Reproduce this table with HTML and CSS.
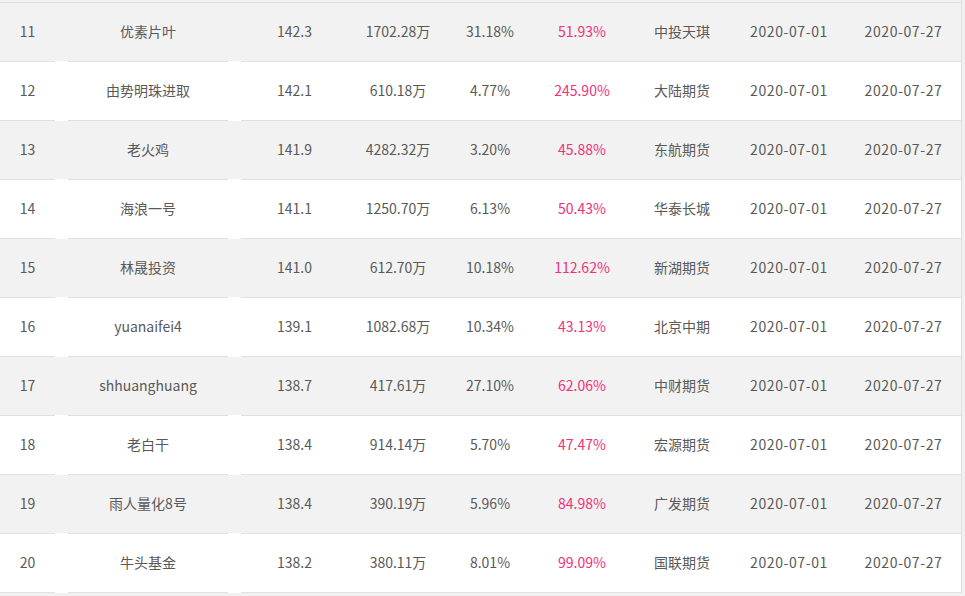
FILE: index.html
```html
<!DOCTYPE html>
<html lang="zh-CN">
<head>
<meta charset="utf-8">
<title>排行</title>
<link rel="stylesheet" href="styles.css">
</head>
<body>
<div class="table">
  <div class="top-strip"></div>
  <div class="row alt"><div class="c rank">11</div><div class="gap"></div><div class="c name">优素片叶</div><div class="gap"></div><div class="c">142.3</div><div class="c">1702.28万</div><div class="c">31.18%</div><div class="c pink">51.93%</div><div class="c">中投天琪</div><div class="c date">2020-07-01</div><div class="c date">2020-07-27</div></div>
  <div class="row"><div class="c rank">12</div><div class="gap"></div><div class="c name">由势明珠进取</div><div class="gap"></div><div class="c">142.1</div><div class="c">610.18万</div><div class="c">4.77%</div><div class="c pink">245.90%</div><div class="c">大陆期货</div><div class="c date">2020-07-01</div><div class="c date">2020-07-27</div></div>
  <div class="row alt"><div class="c rank">13</div><div class="gap"></div><div class="c name">老火鸡</div><div class="gap"></div><div class="c">141.9</div><div class="c">4282.32万</div><div class="c">3.20%</div><div class="c pink">45.88%</div><div class="c">东航期货</div><div class="c date">2020-07-01</div><div class="c date">2020-07-27</div></div>
  <div class="row"><div class="c rank">14</div><div class="gap"></div><div class="c name">海浪一号</div><div class="gap"></div><div class="c">141.1</div><div class="c">1250.70万</div><div class="c">6.13%</div><div class="c pink">50.43%</div><div class="c">华泰长城</div><div class="c date">2020-07-01</div><div class="c date">2020-07-27</div></div>
  <div class="row alt"><div class="c rank">15</div><div class="gap"></div><div class="c name">林晟投资</div><div class="gap"></div><div class="c">141.0</div><div class="c">612.70万</div><div class="c">10.18%</div><div class="c pink">112.62%</div><div class="c">新湖期货</div><div class="c date">2020-07-01</div><div class="c date">2020-07-27</div></div>
  <div class="row"><div class="c rank">16</div><div class="gap"></div><div class="c name">yuanaifei4</div><div class="gap"></div><div class="c">139.1</div><div class="c">1082.68万</div><div class="c">10.34%</div><div class="c pink">43.13%</div><div class="c">北京中期</div><div class="c date">2020-07-01</div><div class="c date">2020-07-27</div></div>
  <div class="row alt"><div class="c rank">17</div><div class="gap"></div><div class="c name">shhuanghuang</div><div class="gap"></div><div class="c">138.7</div><div class="c">417.61万</div><div class="c">27.10%</div><div class="c pink">62.06%</div><div class="c">中财期货</div><div class="c date">2020-07-01</div><div class="c date">2020-07-27</div></div>
  <div class="row"><div class="c rank">18</div><div class="gap"></div><div class="c name">老白干</div><div class="gap"></div><div class="c">138.4</div><div class="c">914.14万</div><div class="c">5.70%</div><div class="c pink">47.47%</div><div class="c">宏源期货</div><div class="c date">2020-07-01</div><div class="c date">2020-07-27</div></div>
  <div class="row alt"><div class="c rank">19</div><div class="gap"></div><div class="c name">雨人量化8号</div><div class="gap"></div><div class="c">138.4</div><div class="c">390.19万</div><div class="c">5.96%</div><div class="c pink">84.98%</div><div class="c">广发期货</div><div class="c date">2020-07-01</div><div class="c date">2020-07-27</div></div>
  <div class="row"><div class="c rank">20</div><div class="gap"></div><div class="c name">牛头基金</div><div class="gap"></div><div class="c">138.2</div><div class="c">380.11万</div><div class="c">8.01%</div><div class="c pink">99.09%</div><div class="c">国联期货</div><div class="c date">2020-07-01</div><div class="c date">2020-07-27</div></div>
</div>
</body>
</html>
```

FILE: styles.css
```css
html, body {
  margin: 0;
  padding: 0;
  background: #f1f1f1;
}

body {
  font-family: "Noto Sans CJK SC", "Noto Sans", sans-serif;
  font-size: 14px;
  color: #595959;
}

.table {
  width: 961px;
  background: #fff;
  border-right: 1px solid #dedede;
}

.top-strip {
  height: 2px;
  background: #f2f2f2;
  border-bottom: 1px solid #dcdce6;
}

.row {
  display: grid;
  grid-template-columns: 55px 13px 160px 13px 107px 100px 84px 100px 100px 114px 115px;
  height: 59px;
  background: #fff;
}

.row.alt {
  background: #f2f2f2;
}

.c {
  display: flex;
  align-items: center;
  justify-content: center;
  padding-bottom: 2px;
  border-bottom: 1px solid #e0e0e0;
  white-space: nowrap;
}

.date {
  letter-spacing: 0.6px;
}

.gap {
  border-bottom: 1px solid #fff;
}

.pink {
  color: #f0317a;
}
```
